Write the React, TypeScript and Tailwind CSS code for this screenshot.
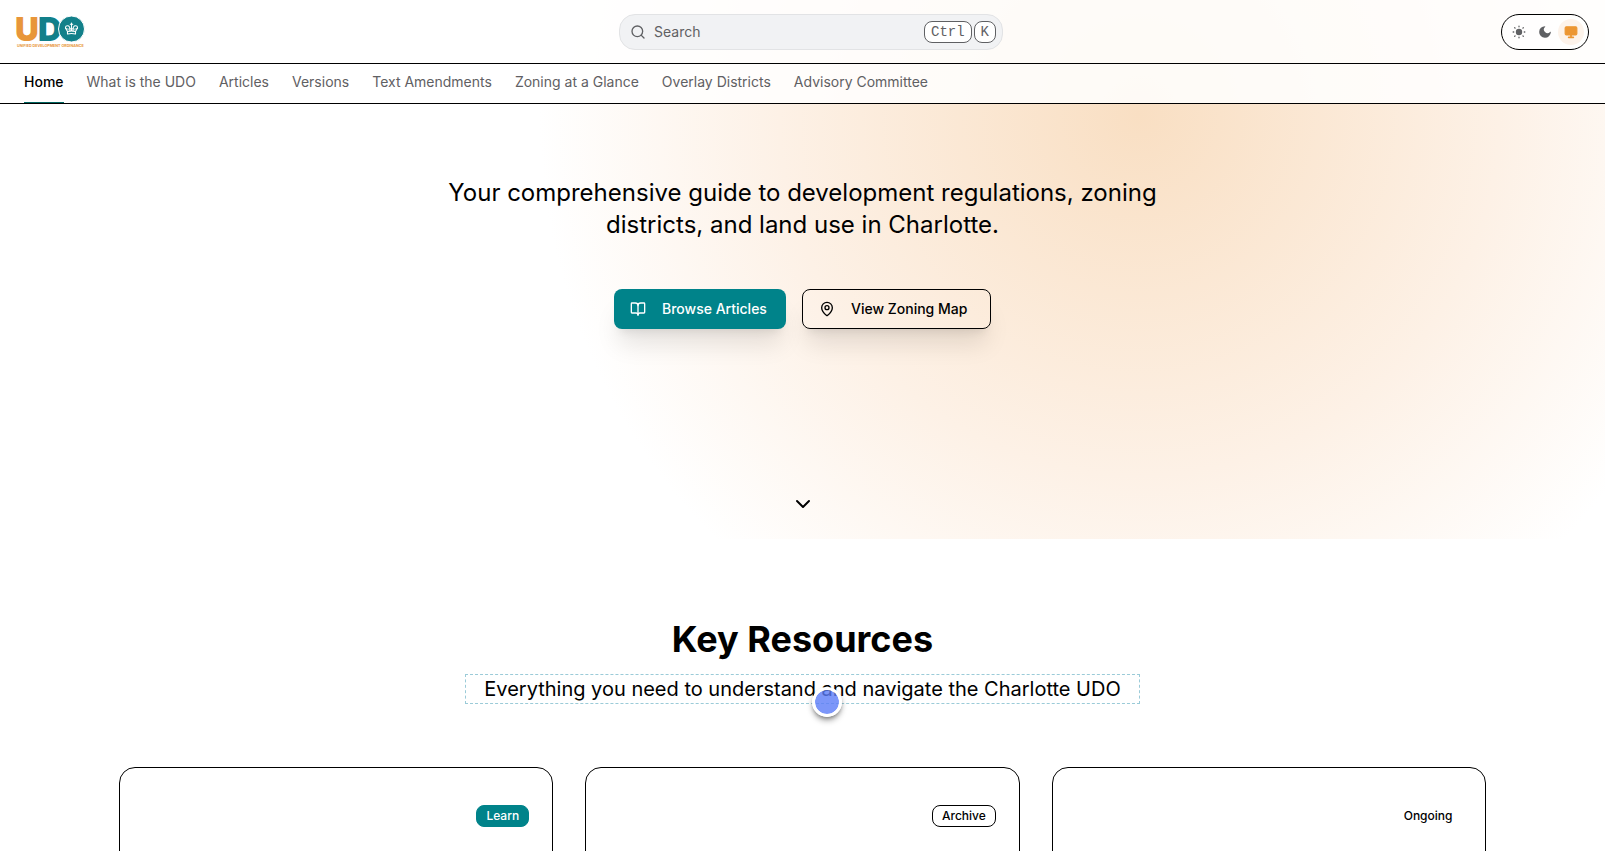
import { BookOpen, ChevronDown, MapPin, Search } from "lucide-react";

const links = [
  "Home",
  "What is the UDO",
  "Articles",
  "Versions",
  "Text Amendments",
  "Zoning at a Glance",
  "Overlay Districts",
  "Advisory Committee",
];

const resources = [
  { label: "Learn", style: "border-[#00838a] bg-[#00838a] text-white" },
  { label: "Archive", style: "border-black text-black" },
  { label: "Ongoing", style: "border-transparent text-black" },
];

function Logo() {
  return (
    <svg width="68" height="32" viewBox="0 0 68 32" className="overflow-visible" role="img" aria-label="UDO home">
      <g fontFamily="Inter, sans-serif" fontWeight="900" fontSize="33">
        <text x="-1" y="25" fill="#e8963a">U</text>
        <text x="22" y="25" fill="#12808a">D</text>
      </g>
      <circle cx="55.5" cy="13" r="13" fill="#12808a" stroke="#fff" strokeWidth="1" />
      <g fill="none" stroke="#fff" strokeWidth="1.1" strokeLinejoin="round" strokeLinecap="round">
        <path d="M51.500 15.500 L49.500 12 Q49.500 9.500 52 9.800 Q54.200 10.200 54 15 M59.500 15.500 L61.500 12 Q61.500 9.500 59 9.800 Q56.800 10.200 57 15" />
        <path d="M55.500 7 V15 M54.300 8.200 H56.700 M51.500 15.500 Q55.500 14.300 59.500 15.500 V18 Q55.500 17 51.500 18 Z" />
        <path d="M49.500 12.500 Q52 14 55.500 12.500 Q59 14 61.500 12.500" strokeWidth="0.8" />
      </g>
      <text x="1" y="31" fontFamily="Inter, sans-serif" fontWeight="700" fontSize="3.7" fill="#e8963a">
        UNIFIED DEVELOPMENT ORDINANCE
      </text>
    </svg>
  );
}

function SunIcon() {
  return (
    <svg width="14" height="14" viewBox="0 0 24 24" fill="currentColor" aria-hidden="true">
      <circle cx="12" cy="12" r="5.5" />
      <g stroke="currentColor" strokeWidth="2.2" strokeLinecap="round">
        <path d="M12 2v1M12 21v1M2 12h1M21 12h1M4.600 4.600l.7.7M18.700 18.700l.7.7M4.600 19.400l.7-.7M18.700 5.300l.7-.7" />
      </g>
    </svg>
  );
}

function MoonIcon() {
  return (
    <svg width="14" height="14" viewBox="0 0 24 24" fill="currentColor" aria-hidden="true">
      <path d="M12 2A10 10 0 1 0 22 12.500C22 11.600 21.200 11.400 20.700 12A5.800 5.800 0 1 1 12 3.300C12.700 2.800 12.500 2 12 2Z" />
    </svg>
  );
}

function MonitorIcon() {
  return (
    <svg width="14" height="14" viewBox="0 0 24 24" fill="currentColor" stroke="currentColor" strokeWidth="2" strokeLinejoin="round" strokeLinecap="round" aria-hidden="true">
      <rect x="2" y="3" width="20" height="14" rx="2" />
      <path d="M8 21h8M12 17v4" strokeWidth="3" />
    </svg>
  );
}

function Header() {
  return (
    <header className="relative z-10 bg-white/85 text-sm text-[#5f6063]">
      <div className="flex h-16 items-center justify-between border-b border-black px-4">
        <a href="#home" className="w-[105px]">
          <Logo />
        </a>
        <button
          type="button"
          className="flex h-9 w-96 items-center gap-2 rounded-2xl border border-[#e2e3e5] bg-[#f1f2f4] pr-1.5 pl-2.5"
        >
          <Search size={16} />
          <span>Search</span>
          <span className="ml-auto flex gap-0.5 font-['Liberation_Mono',monospace]">
            <kbd className="rounded-lg border border-[#5f6063] bg-white px-1.5 font-[inherit]">Ctrl</kbd>
            <kbd className="rounded-lg border border-[#5f6063] bg-white px-1.5 font-[inherit]">K</kbd>
          </span>
        </button>
        <div className="flex h-9 items-center rounded-full border border-black bg-white/50 px-1">
          <button type="button" aria-label="Light theme" className="grid size-[26px] place-items-center">
            <SunIcon />
          </button>
          <button type="button" aria-label="Dark theme" className="grid size-[26px] place-items-center">
            <MoonIcon />
          </button>
          <button
            type="button"
            aria-label="System theme"
            className="grid size-[26px] place-items-center rounded-full bg-[#fdf3ea] text-[#ec9632]"
          >
            <MonitorIcon />
          </button>
        </div>
      </div>
      <nav className="flex h-10 gap-[23px] border-b border-black px-6">
        {links.map((link, i) => (
          <a
            key={link}
            href="#page"
            className={
              i === 0
                ? "flex items-center border-b border-[#00645f] pb-0.5 font-medium text-black"
                : "flex items-center border-b border-transparent pb-0.5"
            }
          >
            {link}
          </a>
        ))}
      </nav>
    </header>
  );
}

export default function App() {
  return (
    <div className="h-screen overflow-hidden bg-white font-['Inter',sans-serif] text-black">
      <Header />
      <main>
        <section className="-mt-[104px] flex h-[539px] flex-col items-center bg-[radial-gradient(circle_600px_at_71%_115px,#f9dfc3,#fdf1e6_60%,#fff)] pt-[177px]">
          <p className="max-w-3xl text-center text-2xl">
            Your comprehensive guide to development regulations, zoning districts, and land use in Charlotte.
          </p>
          <div className="mt-12 flex gap-4 text-sm font-medium">
            <a href="#articles" className="flex h-10 w-[172px] items-center gap-4 rounded-lg bg-[#00838a] px-4 text-white shadow-xl">
              <BookOpen size={16} />
              Browse Articles
            </a>
            <a href="#map" className="flex h-10 w-[189px] items-center gap-4 rounded-lg border border-black px-4 shadow-xl">
              <MapPin size={16} />
              View Zoning Map
            </a>
          </div>
          <button type="button" aria-label="Scroll down" className="mt-auto mb-[23px]">
            <ChevronDown size={24} />
          </button>
        </section>
        <section className="mx-auto max-w-[1400px] px-4 pt-20">
          <div className="flex flex-col items-center">
            <h2 className="text-4xl font-bold">Key Resources</h2>
            <div className="relative mt-[15px] border border-dashed border-[#9bcbd8] px-[18px]">
              <p className="text-xl">Everything you need to understand and navigate the Charlotte UDO</p>
              <span className="absolute top-3 left-[346px] size-[30px] rounded-full border-3 border-white bg-[#5b7cf7]/80 bg-clip-padding shadow-md shadow-black/40" />
            </div>
          </div>
          <div className="mt-[63px] grid grid-cols-3 gap-8">
            {resources.map(({ label, style }) => (
              <article key={label} className="flex h-64 items-start justify-end rounded-2xl border border-black px-[23px] pt-[37px]">
                <span className={`rounded-lg border px-[9px] py-0.5 text-xs font-medium ${style}`}>{label}</span>
              </article>
            ))}
          </div>
        </section>
      </main>
    </div>
  );
}
